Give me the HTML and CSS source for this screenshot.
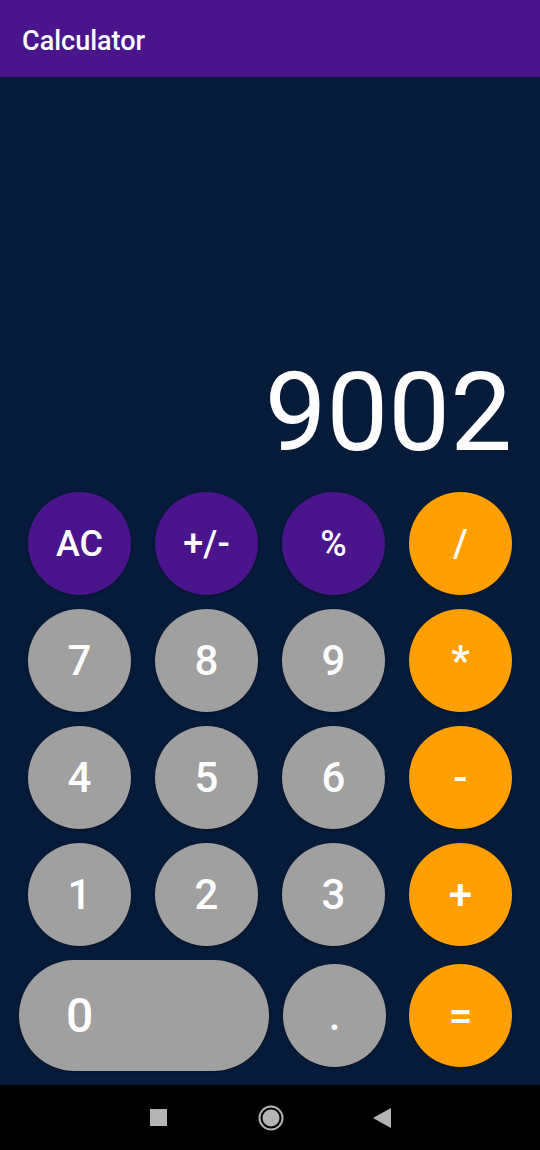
FILE: index.html
```html
<!DOCTYPE html>
<html>
<head>
<meta charset="utf-8">
<link rel="stylesheet" href="styles.css">
</head>
<body>
<div class="screen">
  <header class="appbar"><span class="title">Calculator</span></header>
  <main class="main">
    <div class="display">9002</div>
    <div class="keypad">
      <button class="key op">AC</button>
      <button class="key op">+/-</button>
      <button class="key op">%</button>
      <button class="key fn top">/</button>
      <button class="key num">7</button>
      <button class="key num">8</button>
      <button class="key num">9</button>
      <button class="key fn">*</button>
      <button class="key num">4</button>
      <button class="key num">5</button>
      <button class="key num">6</button>
      <button class="key fn">-</button>
      <button class="key num">1</button>
      <button class="key num">2</button>
      <button class="key num">3</button>
      <button class="key fn">+</button>
      <button class="key num zero">0</button>
      <button class="key num dot">.</button>
      <button class="key fn">=</button>
    </div>
  </main>
  <nav class="navbar">
    <svg class="nav-icon nav-square" width="17" height="17" viewBox="0 0 17 17"><rect x="0" y="0" width="17" height="17" fill="#b4b4b4"/></svg>
    <svg class="nav-icon nav-home" width="26" height="26" viewBox="0 0 26 26"><circle cx="13" cy="13" r="11.5" fill="none" stroke="#b4b4b4" stroke-width="2"/><circle cx="13" cy="13" r="8.5" fill="#b4b4b4"/></svg>
    <svg class="nav-icon" width="18" height="20" viewBox="0 0 18 20"><polygon points="18,0 18,20 0,10" fill="#b4b4b4"/></svg>
  </nav>
</div>
</body>
</html>
```
FILE: styles.css
```css
html, body {
  margin: 0;
  padding: 0;
}
body {
  font-family: Roboto, "Noto Sans", sans-serif;
  background: #061b3a;
}
.screen {
  width: 540px;
  height: 1150px;
  display: flex;
  flex-direction: column;
}
.appbar {
  height: 77px;
  background: #4a148c;
  display: flex;
  align-items: center;
  padding-left: 22px;
  box-sizing: border-box;
  flex: none;
}
.title {
  color: #ffffff;
  font-size: 27px;
  font-weight: 500;
  margin-top: 5px;
}
.main {
  flex: 1;
  background: #061b3a;
  display: flex;
  flex-direction: column;
  justify-content: flex-end;
}
.display {
  color: #ffffff;
  font-size: 110px;
  line-height: 108px;
  text-align: right;
  padding-right: 28px;
  margin-bottom: 25px;
  font-weight: 400;
}
.keypad {
  display: grid;
  grid-template-columns: repeat(4, 103px);
  grid-template-rows: repeat(4, 103px) 111px;
  column-gap: 24px;
  row-gap: 14px;
  padding: 0 28px 14px 28px;
}
.key {
  border: none;
  margin: 0;
  padding: 0;
  width: 103px;
  height: 103px;
  border-radius: 50%;
  color: #ffffff;
  font-family: Roboto, "Noto Sans", sans-serif;
  font-size: 42px;
  line-height: 1;
  font-weight: 500;
  display: flex;
  align-items: center;
  justify-content: center;
  align-self: center;
  box-shadow: 0 1px 3px rgba(0, 0, 0, 0.35);
}
.op {
  background: #4a148c;
  font-size: 36px;
}
.fn {
  background: #ffa000;
}
.fn.top {
  font-size: 38px;
}
.num {
  background: #a0a0a0;
}
.zero {
  grid-column: span 2;
  width: 250px;
  height: 111px;
  margin-left: -9px;
  border-radius: 56px;
  justify-content: flex-start;
  padding-left: 47px;
  font-size: 48px;
}
.dot {
  margin-left: 1px;
}
.navbar {
  height: 65px;
  flex: none;
  background: #000000;
  display: flex;
  align-items: center;
  justify-content: center;
}
.nav-icon {
  display: block;
}
.nav-square {
  margin-right: 91px;
}
.nav-home {
  margin-right: 89px;
}
```
